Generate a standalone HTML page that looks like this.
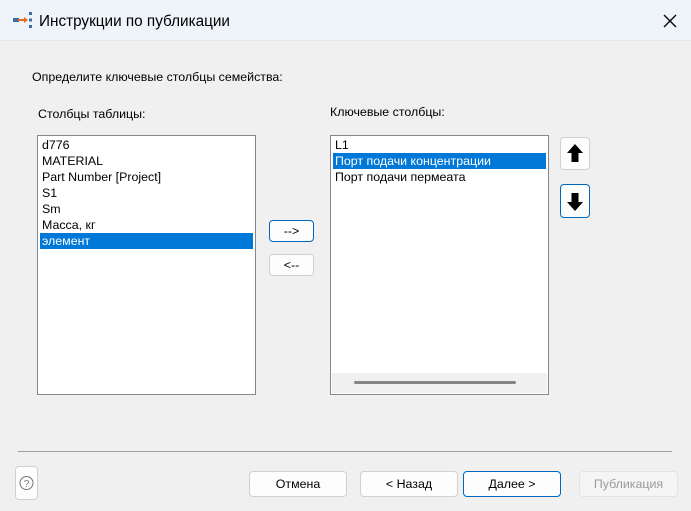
<!DOCTYPE html>
<html><head><meta charset="utf-8"><style>
*{margin:0;padding:0;box-sizing:border-box}
body{width:691px;height:511px;background:#f0f0f0;font-family:"Liberation Sans","DejaVu Sans",sans-serif;font-size:12.4px;color:#000;position:relative;overflow:hidden}
.a{position:absolute}
.title{left:0;top:0;width:691px;height:41px;background:#eef4f9;border-bottom:1px solid #e6e9ec}
.list{background:#fff;border:1px solid #828790}
.it{position:absolute;left:2px;right:2px;height:16px;line-height:16px;padding-left:2px;white-space:nowrap}
.sel{background:#0078d7;color:#fff}
.btn{background:#fdfdfd;border:1px solid #d0d0d0;border-radius:4px;text-align:center;font-size:12.4px}
.def{border-color:#0067c0}
</style></head><body>
<div class="a title"></div>
<svg class="a" style="left:12px;top:11px" width="22" height="18" viewBox="0 0 22 18">
<rect x="1" y="7" width="6" height="4" fill="#3b6ea8"/><line x1="6" y1="9" x2="14" y2="9" stroke="#e86a1a" stroke-width="2"/><path d="M12 6 L16 9 L12 12Z" fill="#e86a1a"/>
<rect x="17" y="1" width="3" height="3" fill="#3b6ea8"/><rect x="17" y="7.5" width="3" height="3" fill="#3b6ea8"/><rect x="17" y="14" width="3" height="3" fill="#3b6ea8"/></svg>
<div class="a" style="left:39px;top:13px;font-size:15.3px">Инструкции по публикации</div>
<svg class="a" style="left:663px;top:14px" width="14" height="14"><path d="M1 1L13 13M13 1L1 13" stroke="#000" stroke-width="1.3"/></svg>
<div class="a" style="left:32px;top:70px">Определите ключевые столбцы семейства:</div>
<div class="a" style="left:38px;top:107px">Столбцы таблицы:</div>
<div class="a" style="left:330px;top:105px">Ключевые столбцы:</div>
<div class="a list" style="left:37px;top:135px;width:219px;height:260px">
<div class="it" style="top:1px">d776</div><div class="it" style="top:17px">MATERIAL</div><div class="it" style="top:33px">Part Number [Project]</div><div class="it" style="top:49px">S1</div><div class="it" style="top:65px">Sm</div><div class="it" style="top:81px">Масса, кг</div><div class="it sel" style="top:97px">элемент</div>
</div>
<div class="a list" style="left:330px;top:135px;width:219px;height:260px">
<div class="it" style="top:1px">L1</div><div class="it sel" style="top:17px">Порт подачи концентрации</div><div class="it" style="top:33px">Порт подачи пермеата</div>
<div class="a" style="left:1px;right:1px;bottom:1px;height:20px;background:#f0f0f0"><div class="a" style="left:22px;top:8px;width:162px;height:3px;border-radius:2px;background:#858585"></div></div>
</div>
<div class="a btn def" style="left:269px;top:220px;width:45px;height:22px;line-height:20px">--&gt;</div>
<div class="a btn" style="left:269px;top:254px;width:45px;height:22px;line-height:20px">&lt;--</div>
<div class="a btn" style="left:560px;top:137px;width:30px;height:33px"><svg width="28" height="31"><path d="M14 6L22 15H17.5V24H10.5V15H6Z" fill="#000"/></svg></div>
<div class="a btn def" style="left:560px;top:184px;width:30px;height:34px"><svg width="28" height="32"><path d="M14 26L22 17H17.5V8H10.5V17H6Z" fill="#000"/></svg></div>
<div class="a" style="left:18px;top:451px;width:654px;height:1px;background:#a0a0a0"></div>
<div class="a btn" style="left:15px;top:466px;width:23px;height:34px"><svg width="21" height="32"><circle cx="10.5" cy="16" r="6.5" fill="none" stroke="#777" stroke-width="1"/><text x="10.5" y="20" font-size="10" text-anchor="middle" fill="#777" font-family="Liberation Sans">?</text></svg></div>
<div class="a btn" style="left:249px;top:471px;width:98px;height:26px;line-height:24px">Отмена</div>
<div class="a btn" style="left:360px;top:471px;width:98px;height:26px;line-height:24px">&lt; Назад</div>
<div class="a btn def" style="left:463px;top:471px;width:98px;height:26px;line-height:24px">Далее &gt;</div>
<div class="a btn" style="left:579px;top:471px;width:99px;height:26px;line-height:24px;color:#9a9a9a;background:#f5f5f5;border-color:#e3e3e3">Публикация</div>
</body></html>
